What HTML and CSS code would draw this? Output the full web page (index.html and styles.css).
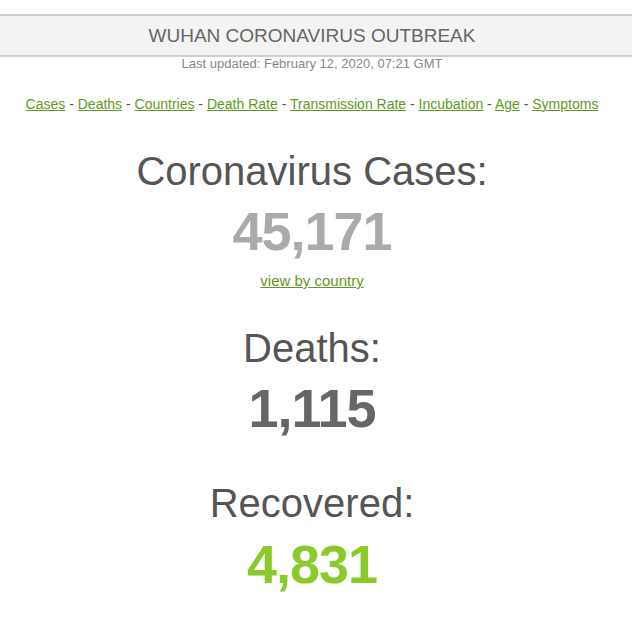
FILE: index.html
```html
<!DOCTYPE html>
<html>
<head>
<meta charset="utf-8">
<link rel="stylesheet" href="styles.css">
</head>
<body>
<div class="banner">WUHAN CORONAVIRUS OUTBREAK</div>
<div class="updated">Last updated: February 12, 2020, 07:21 GMT</div>
<nav class="nav">
<a href="#">Cases</a> - <a href="#">Deaths</a> - <a href="#">Countries</a> - <a href="#">Death Rate</a> - <a href="#">Transmission Rate</a> - <a href="#">Incubation</a> - <a href="#">Age</a> - <a href="#">Symptoms</a>
</nav>
<section class="counter first">
<h1 class="label">Coronavirus Cases:</h1>
<div class="number cases">45,171</div>
<div class="view"><a href="#">view by country</a></div>
</section>
<section class="counter deaths-block">
<h1 class="label">Deaths:</h1>
<div class="number deaths">1,115</div>
</section>
<section class="counter recovered-block">
<h1 class="label">Recovered:</h1>
<div class="number recovered">4,831</div>
</section>
</body>
</html>
```
FILE: styles.css
```css
html, body {
  margin: 0;
  padding: 0;
  background: #fff;
}
body {
  font-family: "Liberation Sans", Arial, sans-serif;
  color: #555;
  padding-top: 14px;
  padding-right: 8px;
}
.banner {
  background: #f3f3f3;
  border-top: 2px solid #d0d0d0;
  border-bottom: 2px solid #d0d0d0;
  text-align: center;
  color: #666;
  font-size: 19px;
  height: 39px;
  line-height: 39px;
  margin-right: -8px;
  padding-right: 8px;
}
.updated {
  text-align: center;
  color: #888;
  font-size: 13px;
  margin-top: -1px;
  line-height: 16px;
}
.nav {
  text-align: center;
  font-size: 14px;
  color: #555;
  margin-top: 23px;
  line-height: 18px;
}
a {
  color: #609a1c;
}
.counter {
  text-align: center;
}
.label {
  font-weight: normal;
  font-size: 40px;
  color: #555;
  margin: 0;
  line-height: 46px;
}
.number {
  font-weight: bold;
  font-size: 54px;
  letter-spacing: -1px;
  line-height: 60px;
  margin-top: 7px;
}
.cases { color: #aaa; }
.deaths { color: #666; }
.recovered { color: #8aca2b; }
.view {
  font-size: 15px;
  line-height: 18px;
  margin-top: 11px;
}
.first { margin-top: 35px; }
.deaths-block { margin-top: 35px; }
.recovered-block { margin-top: 42px; }
.recovered-block .number { margin-top: 8px; }
```
